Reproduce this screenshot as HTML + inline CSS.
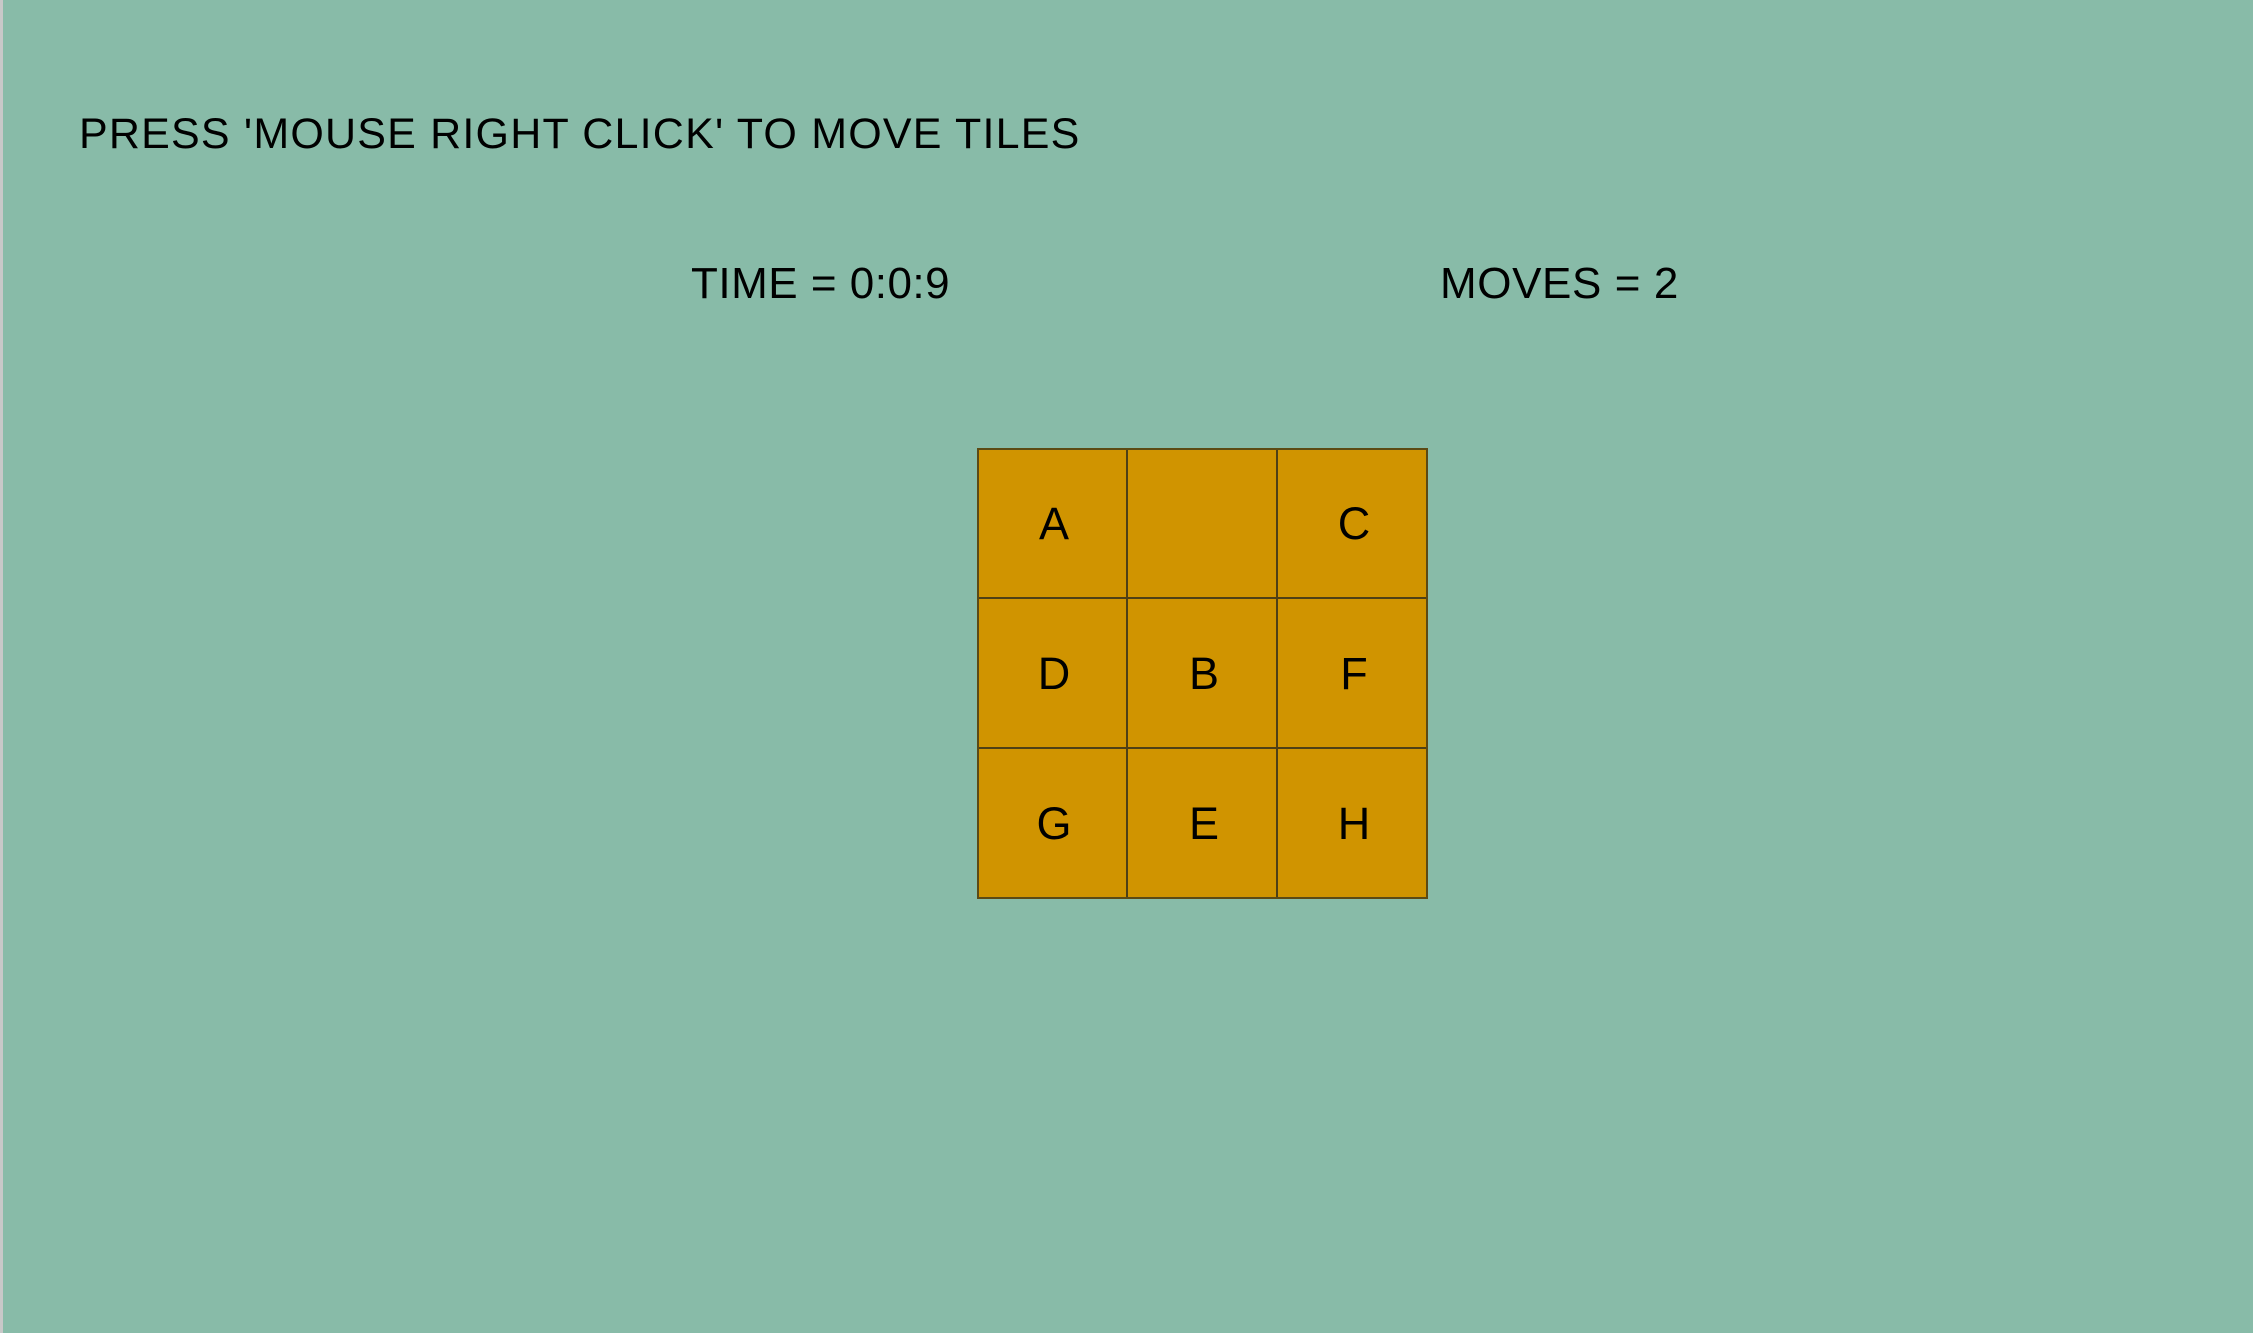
<!DOCTYPE html>
<html><head><style>
html,body{margin:0;padding:0}
body{width:2253px;height:1333px;background:#88bba8;position:relative;overflow:hidden;font-family:"Liberation Sans",Arial,sans-serif;color:#000}
.edge{position:absolute;left:0;top:0;width:3px;height:1333px;background:#c8c8c8}
.t{position:absolute;white-space:nowrap;line-height:1}
.grid{position:absolute;left:977px;top:448px;width:451px;height:451px;background:#d09400;box-sizing:border-box;border:2px solid #5c4a14}
.c{position:absolute;width:150px;height:150px;box-sizing:border-box;display:flex;align-items:center;justify-content:center;font-size:45px;padding-bottom:3px}
.vl{position:absolute;top:0;width:2px;height:100%;background:#4e4016}
.hl{position:absolute;left:0;height:2px;width:100%;background:#4e4016}
</style></head><body>
<div class="edge"></div>
<div class="t" style="left:79px;top:113px;font-size:43px;letter-spacing:1.2px">PRESS 'MOUSE RIGHT CLICK' TO MOVE TILES</div>
<div class="t" style="left:691px;top:262px;font-size:44px;letter-spacing:0.5px">TIME = 0:0:9</div>
<div class="t" style="left:1440px;top:262px;font-size:44px;letter-spacing:0.6px">MOVES = 2</div>
<div class="grid">
<div class="vl" style="left:147px"></div><div class="vl" style="left:297px"></div>
<div class="hl" style="top:147px"></div><div class="hl" style="top:297px"></div>
<div class="c" style="left:0;top:0">A</div>
<div class="c" style="left:300px;top:0">C</div>
<div class="c" style="left:0;top:150px">D</div>
<div class="c" style="left:150px;top:150px">B</div>
<div class="c" style="left:300px;top:150px">F</div>
<div class="c" style="left:0;top:300px">G</div>
<div class="c" style="left:150px;top:300px">E</div>
<div class="c" style="left:300px;top:300px">H</div>
</div>
</body></html>
